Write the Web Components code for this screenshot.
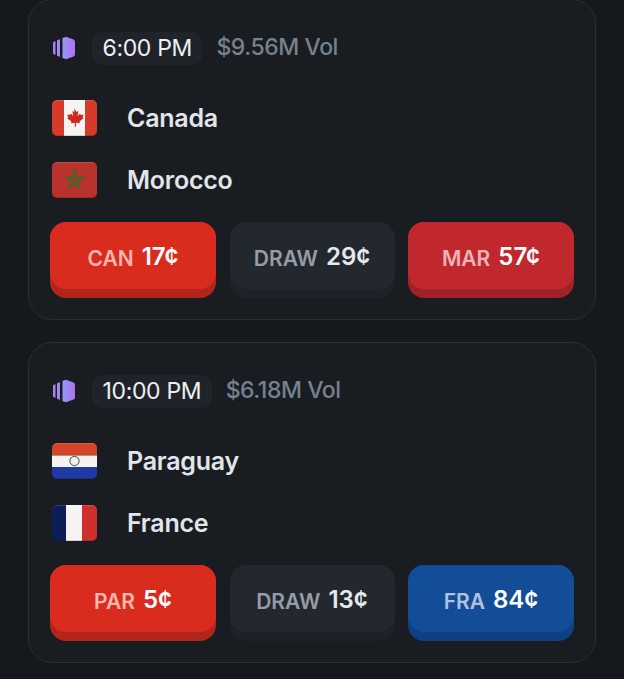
<!DOCTYPE html>
<html>
<head>
<meta charset="utf-8">
<title>Matches</title>
<style>
    html, body {
        margin: 0;
        height: 100%;
        overflow: hidden;
        background-color: #15181c;
    }
    body {
        font-family: "Inter", "Liberation Sans", sans-serif;
        color: #e5e8ec;
    }
    match-list {
        margin-top: -1px;
    }
</style>
</head>
<body>
<match-list>
    <match-card time="6:00 PM" vol="$9.56M Vol">
        <team-row slot="teams" flag="can">Canada</team-row>
        <team-row slot="teams" flag="mar">Morocco</team-row>
        <bet-button slot="bets" tone="red" label="CAN">17¢</bet-button>
        <bet-button slot="bets" tone="draw" label="DRAW">29¢</bet-button>
        <bet-button slot="bets" tone="crimson" label="MAR">57¢</bet-button>
    </match-card>
    <match-card time="10:00 PM" vol="$6.18M Vol">
        <team-row slot="teams" flag="par">Paraguay</team-row>
        <team-row slot="teams" flag="fra">France</team-row>
        <bet-button slot="bets" tone="red" label="PAR">5¢</bet-button>
        <bet-button slot="bets" tone="draw" label="DRAW">13¢</bet-button>
        <bet-button slot="bets" tone="blue" label="FRA">84¢</bet-button>
    </match-card>
</match-list>

<script>
class MatchList extends HTMLElement {
    constructor() {
        super();
        this.attachShadow({ mode: 'open' });
        this.shadowRoot.innerHTML = `
            <style>
                :host {
                    display: flex;
                    flex-direction: column;
                    gap: 22px;
                    padding: 0 28px;
                }
            </style>
            <slot></slot>
        `;
    }
}

class MatchCard extends HTMLElement {
    constructor() {
        super();
        this.attachShadow({ mode: 'open' });
        this.shadowRoot.innerHTML = `
            <style>
                :host {
                    display: block;
                    box-sizing: border-box;
                    height: 321px;
                    padding: 32px 21px 0;
                    background-color: #191d21;
                    border: 1px solid #2a2f36;
                    border-radius: 24px;
                }
                .header {
                    display: flex;
                    align-items: center;
                    height: 33px;
                    padding-left: 2px;
                }
                svg {
                    width: 24px;
                    height: 24px;
                    flex: none;
                    margin-right: 16px;
                    margin-bottom: 1px;
                }
                .time {
                    display: flex;
                    align-items: center;
                    box-sizing: border-box;
                    height: 33px;
                    padding: 0 10.5px 2px;
                    border-radius: 10px;
                    background-color: #20242a;
                    font-size: 23px;
                    color: #eef0f2;
                    letter-spacing: -0.35px;
                }
                .vol {
                    margin-left: 14px;
                    margin-bottom: 4px;
                    font-size: 23px;
                    font-weight: 500;
                    color: #76828f;
                    letter-spacing: -0.45px;
                }
                .teams {
                    display: flex;
                    flex-direction: column;
                    gap: 26px;
                    margin-top: 35px;
                }
                .bets {
                    display: grid;
                    grid-template-columns: 166px 165px 166px;
                    gap: 13.5px;
                    margin-top: 24px;
                }
            </style>
            <div class="header">
                <svg viewBox="0 0 24 24">
                    <defs>
                        <linearGradient id="logo" x1="0" x2="1" y1="0" y2="0">
                            <stop offset="0" stop-color="#8f9cf2"/>
                            <stop offset="1" stop-color="#b76cf2"/>
                        </linearGradient>
                    </defs>
                    <g fill="url(#logo)">
                        <path d="M1 6.5 3.5 5v14L1 17.5z"/>
                        <path d="M5 4.5 8 3v18l-3-1.5z"/>
                        <path d="M10.5 2 14 .8l7.5 2.7Q23 4 23 6v12q0 2-1.5 2.5L14 23.2 10.5 22z"/>
                    </g>
                </svg>
                <span class="time"></span>
                <span class="vol"></span>
            </div>
            <div class="teams"><slot name="teams"></slot></div>
            <div class="bets"><slot name="bets"></slot></div>
        `;
        this.shadowRoot.querySelector('.time').textContent = this.getAttribute('time');
        this.shadowRoot.querySelector('.vol').textContent = this.getAttribute('vol');
    }
}

class TeamRow extends HTMLElement {
    constructor() {
        super();
        this.attachShadow({ mode: 'open' });
        this.shadowRoot.innerHTML = `
            <style>
                :host {
                    display: flex;
                    align-items: center;
                    gap: 30px;
                    height: 36px;
                    padding-left: 2px;
                    font-size: 25px;
                    font-weight: 600;
                    color: #e2e5e9;
                    letter-spacing: -0.25px;
                }
            </style>
            <flag-icon></flag-icon>
            <slot></slot>
        `;
        this.shadowRoot.querySelector('flag-icon').setAttribute('code', this.getAttribute('flag'));
    }
}

const FLAGS = {
    can: `
        <rect width="45" height="36" fill="#d63a2b"/>
        <rect x="12" width="21" height="36" fill="#f6f4f2"/>
        <path fill="#d0281f" d="M22.5 8.5l2 3.6 1.9-1-.8 5 2.5-2.6.6 1.5 2.9-.5-1 3.1 1 .6-4.2 3.4.5 1.6-4-.5.1 4.1h-1.2l.1-4.1-4 .5.5-1.6-4.2-3.4 1-.6-1-3.1 2.9.5.6-1.5 2.5 2.6-.8-5 1.9 1z"/>
    `,
    mar: `
        <rect width="45" height="36" fill="#b9322c"/>
        <path fill="none" stroke="#5e5a2e" stroke-width="2.6" d="M22.5 9.5l5 15.5-13-9.5h16l-13 9.5z"/>
    `,
    par: `
        <rect width="45" height="12.5" fill="#d5432b"/>
        <rect y="12.5" width="45" height="11.5" fill="#f4f3f1"/>
        <rect y="24" width="45" height="12" fill="#1f3aa6"/>
        <circle cx="22.5" cy="18" r="4.6" fill="#f4f3f1" stroke="#45474c" stroke-width="1"/>
    `,
    fra: `
        <rect width="15" height="36" fill="#0d1e57"/>
        <rect x="14" width="16" height="36" fill="#f6f4f2"/>
        <rect x="30" width="15" height="36" fill="#cf2f2d"/>
    `
};

class FlagIcon extends HTMLElement {
    static get observedAttributes() {
        return ['code'];
    }

    constructor() {
        super();
        this.attachShadow({ mode: 'open' });
        this.shadowRoot.innerHTML = `
            <style>
                :host {
                    display: block;
                    position: relative;
                    flex: none;
                    width: 45px;
                    height: 36px;
                    border-radius: 5px;
                    overflow: hidden;
                }
                :host::after {
                    content: '';
                    position: absolute;
                    inset: 0;
                    border-radius: 5px;
                    box-shadow: inset 0 1px 0 rgba(255, 255, 255, 0.14), inset 0 -1px 0 rgba(0, 0, 0, 0.14);
                }
                svg {
                    display: block;
                    width: 45px;
                    height: 36px;
                }
            </style>
            <svg viewBox="0 0 45 36"></svg>
        `;
    }

    attributeChangedCallback(name, oldValue, value) {
        this.shadowRoot.querySelector('svg').innerHTML = FLAGS[value] || '';
    }
}

class BetButton extends HTMLElement {
    constructor() {
        super();
        this.attachShadow({ mode: 'open' });
        this.shadowRoot.innerHTML = `
            <style>
                :host {
                    display: block;
                    height: 76px;
                    border-radius: 16px;
                    padding-bottom: 9px;
                    box-sizing: border-box;
                    background-color: var(--edge);
                }
                :host([tone="red"]) { --face: #da2b1f; --edge: #b2251b; --label: #f9b7ad; --price: #ffffff; }
                :host([tone="crimson"]) { --face: #c1282e; --edge: #a02227; --label: #ecb4b7; --price: #ffffff; }
                :host([tone="blue"]) { --face: #134c97; --edge: #0f4084; --label: #b0c1dd; --price: #ffffff; }
                :host([tone="draw"]) { --face: #23282f; --edge: #1e2228; --label: #969ca6; --price: #e5e8ec; }
                .face {
                    display: flex;
                    align-items: baseline;
                    justify-content: center;
                    gap: 8px;
                    height: 100%;
                    box-sizing: border-box;
                    padding-top: 21px;
                    border-radius: 16px;
                    background-color: var(--face);
                }
                .label {
                    font-size: 21px;
                    font-weight: 600;
                    color: var(--label);
                }
                .price {
                    font-size: 24px;
                    font-weight: 600;
                    color: var(--price);
                    position: relative;
                    top: -1px;
                }
            </style>
            <div class="face">
                <span class="label"></span>
                <span class="price"><slot></slot></span>
            </div>
        `;
        this.shadowRoot.querySelector('.label').textContent = this.getAttribute('label');
    }
}

customElements.define('flag-icon', FlagIcon);
customElements.define('team-row', TeamRow);
customElements.define('bet-button', BetButton);
customElements.define('match-card', MatchCard);
customElements.define('match-list', MatchList);
</script>
</body>
</html>
